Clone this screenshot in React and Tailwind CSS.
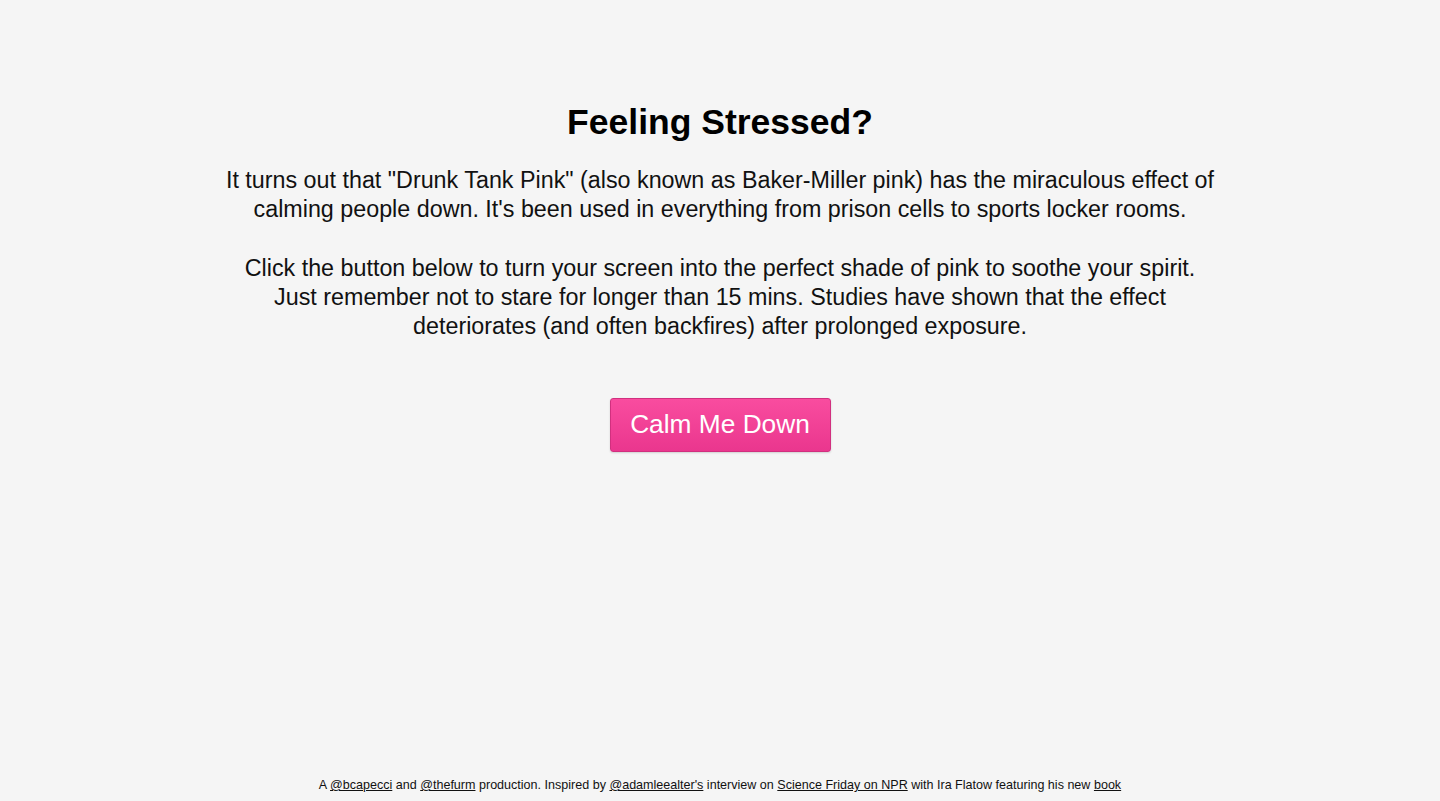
export default function App() {
  const font = { fontFamily: '"Liberation Sans", Arial, sans-serif' };
  return (
    <div className="min-h-[801px] h-[801px] bg-[#f5f5f5] text-black flex flex-col items-center" style={font}>
      <div className="flex flex-col items-center pt-[100px]">
        <h1 className="text-[35.5px] font-bold leading-[44px]">Feeling Stressed?</h1>
        <div className="mt-[22px] text-[23.3px] leading-[29px] text-center text-[#111]">
          <p>
            It turns out that "Drunk Tank Pink" (also known as Baker-Miller pink) has the miraculous effect of
            <br />
            calming people down. It's been used in everything from prison cells to sports locker rooms.
          </p>
          <p className="mt-[30px]">
            Click the button below to turn your screen into the perfect shade of pink to soothe your spirit.
            <br />
            Just remember not to stare for longer than 15 mins. Studies have shown that the effect
            <br />
            deteriorates (and often backfires) after prolonged exposure.
          </p>
        </div>
        <button className="mt-[57px] w-[221px] h-[54px] rounded-[3px] border border-[#d1307f] bg-gradient-to-b from-[#f94c9f] to-[#ea368e] text-white text-[26.3px] shadow-[0_1px_2px_rgba(0,0,0,0.15)]">
          Calm Me Down
        </button>
      </div>
      <div className="mt-auto pb-[8px] text-[12.55px] leading-[16px] text-[#111]">
        A <a className="underline">@bcapecci</a> and <a className="underline">@thefurm</a> production. Inspired by{' '}
        <a className="underline">@adamleealter's</a> interview on <a className="underline">Science Friday on NPR</a> with Ira Flatow featuring his new{' '}
        <a className="underline">book</a>
      </div>
    </div>
  );
}
